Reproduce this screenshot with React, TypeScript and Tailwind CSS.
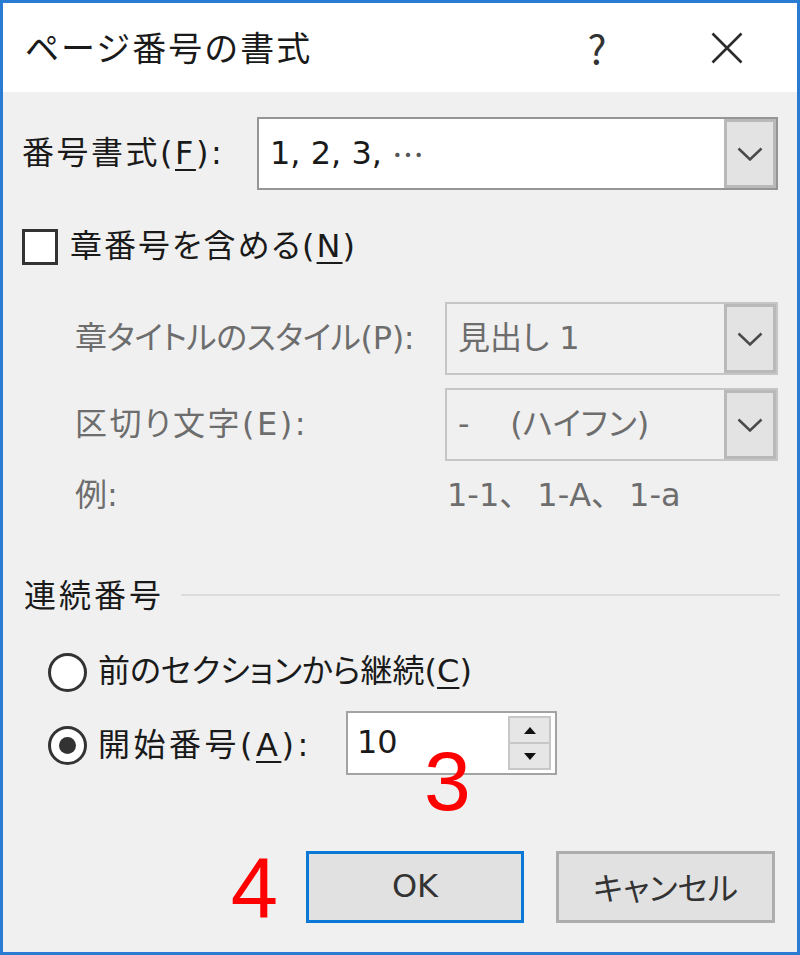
import React from "react";

const U = ({ children }: { children: React.ReactNode }) => (
  <span className="underline decoration-[2px] underline-offset-[5px]">{children}</span>
);

const Chevron = ({ color = "#4a4a4a" }: { color?: string }) => (
  <svg width="26" height="14" viewBox="0 0 26 14">
    <polyline points="1.5,1.5 13,12.5 24.5,1.5" fill="none" stroke={color} strokeWidth="2.5" />
  </svg>
);

const Combo = ({ children, disabled = false }: { children: React.ReactNode; disabled?: boolean }) => (
  <div
    className={
      "flex-1 h-[73px] flex border-2 " +
      (disabled ? "border-[#c6c6c6] bg-[#f0f0f0]" : "border-[#959595] bg-white")
    }
  >
    <div
      className={
        "flex-1 flex items-center pl-[11px] pb-[2px] whitespace-pre " +
        (disabled ? "text-[#6d6d6d]" : "text-[#1a1a1a]")
      }
    >
      {children}
    </div>
    <div className="w-[52px] flex items-center justify-center bg-[#e3e3e3] shadow-[inset_0_0_0_3px_#b9b9b9]">
      <Chevron />
    </div>
  </div>
);

export default function App() {
  return (
    <div
      lang="ja"
      className="w-[800px] h-[955px] border-[3px] border-[#2a7bd3] bg-[#f0f0f0] flex flex-col font-['DejaVu_Sans','Noto_Sans_CJK_JP',sans-serif] [font-feature-settings:'palt'] text-[32px] leading-none text-[#1a1a1a]"
    >
      {/* Title bar */}
      <div className="h-[89px] bg-white flex items-center">
        <div className="flex-1 pl-[22px] text-[34px] tracking-[2px] [font-feature-settings:normal] font-['Noto_Sans_CJK_JP',sans-serif] text-[#1a1a1a] pb-[2px]">
          ページ番号の書式
        </div>
        <div className="w-[120px] flex items-center justify-center text-[40px] font-['Noto_Sans_CJK_JP',sans-serif] text-[#333] pb-[2px]">
          ?
        </div>
        <div className="w-[140px] flex items-center justify-center">
          <svg width="32" height="32" viewBox="0 0 32 32">
            <path d="M1.5 1.5 L30.5 30.5 M30.5 1.5 L1.5 30.5" stroke="#2b2b2b" strokeWidth="2.6" fill="none" />
          </svg>
        </div>
      </div>

      {/* Body */}
      <div className="flex-1 flex flex-col pl-[19px] pr-[19px]">
        {/* 番号書式 */}
        <div className="mt-[25px] flex items-center">
          <div className="w-[235px] pb-[2px] tracking-[2.5px]">
            番号書式(<U>F</U>):
          </div>
          <Combo>
            1, 2, 3, <span className="font-['Noto_Sans_CJK_JP',sans-serif] text-[#555]">…</span>
          </Combo>
        </div>

        {/* checkbox */}
        <div className="mt-[39px] flex items-center h-[36px]">
          <div className="w-[36px] h-[36px] border-[3px] border-[#333] bg-white" />
          <div className="ml-[12px] pb-[2px] tracking-[2px]">
            章番号を含める(<U>N</U>)
          </div>
        </div>

        {/* disabled rows */}
        <div className="mt-[37px] flex items-center text-[#6d6d6d]">
          <div className="ml-[53px] w-[370px] pb-[2px] tracking-[-0.3px]">章タイトルのスタイル(P):</div>
          <Combo disabled>見出し 1</Combo>
        </div>
        <div className="mt-[13px] flex items-center text-[#6d6d6d]">
          <div className="ml-[53px] w-[370px] pb-[2px] tracking-[2.5px]">区切り文字(E):</div>
          <Combo disabled>{"-    (ハイフン)"}</Combo>
        </div>
        <div className="mt-[14px] h-[40px] flex items-center text-[#6d6d6d]">
          <div className="ml-[53px] w-[372px]">例:</div>
          <div className="[font-feature-settings:normal]">
            1-1<span className="mr-[6px]">、</span>1-A<span className="mr-[6px]">、</span>1-a
          </div>
        </div>

        {/* group header */}
        <div className="mt-[62px] h-[40px] flex items-center">
          <div className="w-[159px] pl-[2px] pb-[2px] tracking-[3px]">連続番号</div>
          <div className="flex-1 mr-[-2px] h-[2px] bg-[#dcdcdc] mb-[4px]" />
        </div>

        {/* radio 1 */}
        <div className="mt-[35px] h-[40px] flex items-center">
          <div className="ml-[26px] w-[39px] h-[39px] rounded-full border-[3px] border-[#333] bg-white" />
          <div className="ml-[11px] pb-[2px]">
            前のセクションから継続(<U>C</U>)
          </div>
        </div>

        {/* radio 2 + spin */}
        <div className="relative mt-[19px] h-[64px] flex items-center">
          <div className="ml-[26px] w-[39px] h-[39px] rounded-full border-[3px] border-[#333] bg-white flex items-center justify-center mt-[5px]">
            <div className="w-[17px] h-[17px] rounded-full bg-[#333]" />
          </div>
          <div className="ml-[11px] w-[248px] pb-[2px] mt-[5px] tracking-[3.5px]">
            開始番号(<U>A</U>):
          </div>
          <div className="w-[211px] h-[64px] border-2 border-[#a3a3a3] bg-white flex items-center">
            <div className="flex-1 pl-[9px] pb-[2px] text-[#1a1a1a]">10</div>
            <div className="w-[43px] h-[54px] mr-[4px] flex flex-col">
              <div className="flex-1 bg-[#e6e6e6] border-2 border-[#c7c7c7] flex items-center justify-center">
                <svg width="12" height="7" viewBox="0 0 12 7">
                  <polygon points="0,7 12,7 6,0" fill="#111" />
                </svg>
              </div>
              <div className="flex-1 bg-[#e6e6e6] border-2 border-t-0 border-[#c7c7c7] flex items-center justify-center">
                <svg width="12" height="7" viewBox="0 0 12 7">
                  <polygon points="0,0 12,0 6,7" fill="#111" />
                </svg>
              </div>
            </div>
          </div>
          {/* annotation 3 */}
          <div className="absolute left-[402px] top-[28px] text-[84px] leading-none text-[#ff0000] font-['Liberation_Sans',sans-serif]">
            3
          </div>
        </div>

        {/* buttons */}
        <div className="mt-[76px] h-[72px] flex items-center justify-end pr-[3px]">
          <div className="mr-[28px] h-[72px] flex items-center text-[85px] leading-none text-[#ff0000] font-['Liberation_Sans',sans-serif]">
            4
          </div>
          <div className="w-[218px] h-[72px] bg-[#e1e1e1] border-[3px] border-[#0a78d7] flex items-center justify-center pb-[2px] text-[#333]">
            OK
          </div>
          <div className="ml-[32px] w-[219px] h-[72px] bg-[#e1e1e1] border-[3px] border-[#adadad] flex items-center justify-center pb-[2px] text-[#333] font-['Noto_Sans_CJK_JP',sans-serif]">
            キャンセル
          </div>
        </div>
      </div>
    </div>
  );
}
